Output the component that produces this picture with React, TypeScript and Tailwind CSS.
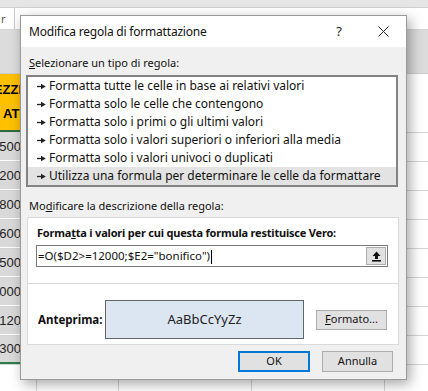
import React from "react";

const ListArrow = () => (
  <svg width="9" height="7" viewBox="0 0 9 7" className="shrink-0">
    <path d="M0 3.5H5" stroke="#222" strokeWidth="1.3" />
    <path d="M4 0.8L8.8 3.5L4 6.2Z" fill="#222" />
  </svg>
);

const items = [
  "Formatta tutte le celle in base ai relativi valori",
  "Formatta solo le celle che contengono",
  "Formatta solo i primi o gli ultimi valori",
  "Formatta solo i valori superiori o inferiori alla media",
  "Formatta solo i valori univoci o duplicati",
  "Utilizza una formula per determinare le celle da formattare",
];

const nums = ["500", "200", "800", "600", "500", "000", "120", "300"];

function GridCells({ first }: { first: React.ReactNode }) {
  return (
    <>
      {first}
      <div className="w-[82px] border-r border-[#d4d4d4]" />
      <div className="w-[133px] border-r border-[#d4d4d4]" />
      <div className="w-[133px] border-r border-[#d4d4d4]" />
      <div className="flex-1" />
    </>
  );
}

export default function App() {
  return (
    <div className="relative w-[428px] h-[391px] overflow-hidden bg-white font-['Noto_Sans',sans-serif] text-[12px] text-black">
      {/* spreadsheet background */}
      <div className="flex flex-col h-full">
        <div className="h-[8px] bg-[#e6e6e6] border-b border-[#cfcfcf]" />
        <div className="h-[22px] flex border-b border-[#d4d4d4]">
          <div className="w-[15px] border-r border-[#c8c8c8] overflow-hidden text-[11px] leading-[22px] text-[#555] pl-[1px]">r</div>
        </div>
        <div className="h-[44px] bg-[#dcdcdc] border-b border-[#cdcdcd]" />
        <div className="h-[59px] flex border-b border-[#d4d4d4]">
          <GridCells
            first={
              <div className="w-[37px] bg-[#ffc000] border-b-2 border-[#2e6b45] flex flex-col justify-center font-['Liberation_Sans',sans-serif] font-bold text-[13px] leading-[24px] overflow-hidden">
                <div className="flex justify-end pr-[15px] whitespace-nowrap">PREZZI</div>
                <div className="flex justify-end pr-[14px] whitespace-nowrap">ATI</div>
              </div>
            }
          />
        </div>
        {nums.map((n, i) => (
          <div key={i} className="h-[29px] flex border-b border-[#d4d4d4]">
            <GridCells
              first={
                <div
                  className={
                    i === nums.length - 1
                      ? "w-[37px] bg-[#d9d9d9] border-b-2 border-[#2e7d4f] flex items-center justify-end pr-[16px] font-['Liberation_Sans',sans-serif] text-[13px] text-[#222]"
                      : "w-[37px] bg-[#d9d9d9] border-b border-white flex items-center justify-end pr-[16px] font-['Liberation_Sans',sans-serif] text-[13px] text-[#222]"
                  }
                >
                  {n}
                </div>
              }
            />
          </div>
        ))}
        <div className="flex-1 flex">
          <GridCells first={<div className="w-[37px] border-r border-[#d4d4d4]" />} />
        </div>
      </div>

      {/* dialog */}
      <div className="absolute left-[20px] top-[15px] w-[387px] h-[365px] bg-[#f0f0f0] border border-[#9a9a9a] shadow-[3px_4px_12px_rgba(0,0,0,0.35)] flex flex-col">
        <div className="h-[31px] bg-white flex items-center pl-[8px] pr-[17px] shrink-0">
          <span className="flex-1 text-[12px] tracking-[-0.2px] text-[#111]">Modifica regola di formattazione</span>
          <span className="text-[13px] mr-[36px] text-[#222]">?</span>
          <svg width="11" height="11" viewBox="0 0 11 11">
            <path d="M0.5 0.5L10.5 10.5M10.5 0.5L0.5 10.5" stroke="#222" strokeWidth="1" />
          </svg>
        </div>

        <div className="flex flex-col">
          <div className="mt-[9px] ml-[8px] leading-[14px] text-[11px] text-[#111]">
            <span className="underline">S</span>elezionare un tipo di regola:
          </div>
          <div className="mt-[5px] ml-[5px] w-[372px] h-[112px] border-2 border-[#838383] bg-white flex flex-col">
            {items.map((t, i) => (
              <div
                key={i}
                className={
                  i === items.length - 1
                    ? "h-[18px] flex items-center gap-[3px] pl-[9px] bg-[#e3e3e3] text-[#111]"
                    : "h-[18px] flex items-center gap-[3px] pl-[9px] text-[#111]"
                }
              >
                <ListArrow />
                <span className="whitespace-nowrap">{t}</span>
              </div>
            ))}
          </div>

          <div className="mt-[12px] ml-[8px] leading-[14px] text-[11px] text-[#111]">
            Mo<span className="underline">d</span>ificare la descrizione della regola:
          </div>

          <div className="mt-[4px] ml-[6px] w-[372px] h-[128px] bg-white border border-[#d9d9d9] pl-[8px]">
            <div className="pt-[8px] pl-[1px] leading-[14px] text-[11px] tracking-[-0.2px] font-bold text-[#111] whitespace-nowrap">
              Forma<span className="underline">t</span>ta i valori per cui questa formula restituisce Vero:
            </div>
            <div className="mt-[5px] w-[352px] h-[22px] border border-[#7a7a7a] grid grid-cols-[1fr_20px] items-center pr-[1px]">
              <div className="min-w-0 overflow-hidden pl-[1px] text-[11.5px] leading-[20px] text-[#111] whitespace-nowrap">
                <span>=O($D2&gt;=12000;$E2="bonifico")</span>
                <span className="inline-block align-middle w-[1px] h-[14px] bg-black ml-[1px]" />
              </div>
              <div className="h-[18px] bg-[#e1e1e1] border border-[#adadad] flex items-center justify-center">
                <svg width="9" height="11" viewBox="0 0 9 11">
                  <path d="M4.5 0.5L8.5 5H6V8H3V5H0.5Z" fill="#111" />
                  <rect x="0" y="9" width="9" height="1.6" fill="#111" />
                </svg>
              </div>
            </div>
            <div className="mt-[16px] -ml-[8px] w-[370px] h-[1px] bg-[#d9d9d9]" />
            <div className="mt-[16px] flex items-center">
              <div className="w-[67px] ml-[2px] font-bold text-[11.5px] text-[#111]">Anteprima:</div>
              <div className="w-[199px] h-[39px] bg-[#dce6f2] border border-[#646464] flex items-center justify-center text-[13px] text-[#222]">
                AaBbCcYyZz
              </div>
              <div className="ml-[12px] w-[71px] h-[20px] bg-[#e1e1e1] border border-[#adadad] flex items-center justify-center text-[11px] text-[#111]">
                <span>
                  <span className="underline">F</span>ormato...
                </span>
              </div>
            </div>
          </div>

          <div className="mt-[6px] flex justify-end gap-[12px] pr-[13px] text-[11px]">
            <div className="w-[72px] h-[21px] bg-[#e1e1e1] border-2 border-[#0078d7] flex items-center justify-center text-[#111]">
              OK
            </div>
            <div className="w-[71px] h-[21px] bg-[#e1e1e1] border border-[#adadad] flex items-center justify-center text-[#111]">
              Annulla
            </div>
          </div>
        </div>
      </div>
    </div>
  );
}
